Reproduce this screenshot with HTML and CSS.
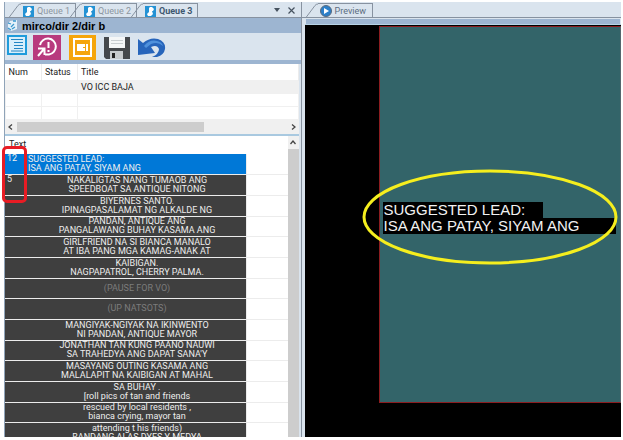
FILE: index.html
```html
<!DOCTYPE html>
<html lang="en">
<head>
    <meta charset="UTF-8">
    <meta name="viewport" content="width=device-width, initial-scale=1.0">
    <title>Prompter Queue</title>
    <link rel="stylesheet" href="styles.css">
</head>
<body>
    <svg class="defs" width="0" height="0" aria-hidden="true">
        <symbol id="slant" viewBox="0 0 12 14">
            <path d="M0 14 L9 2 Q10 .5 12 .5" fill="none" stroke="#8792a0"/>
        </symbol>
        <symbol id="queue-icon" viewBox="0 0 11 11">
            <rect width="11" height="11" fill="#2492d4"/>
            <path d="M5 1h2l2 2-1 2H7l1 3-2 2H3L2 8l2-2V2z" fill="#fff"/>
        </symbol>
    </svg>

    <div class="app">
        <section class="queue">
            <nav class="tabs">
                <button class="tab">
                    <svg class="slant"><use href="#slant"/></svg>
                    <span class="tab-body"><svg class="tab-icon"><use href="#queue-icon"/></svg>Queue 1</span>
                </button>
                <button class="tab">
                    <svg class="slant"><use href="#slant"/></svg>
                    <span class="tab-body"><svg class="tab-icon"><use href="#queue-icon"/></svg>Queue 2</span>
                </button>
                <button class="tab active">
                    <svg class="slant"><use href="#slant"/></svg>
                    <span class="tab-body"><svg class="tab-icon"><use href="#queue-icon"/></svg>Queue 3</span>
                </button>
                <div class="tab-tools">
                    <button aria-label="Tab list"><svg width="6" height="4" viewBox="0 0 6 4"><path d="M0 0h6L3 4z" fill="#46525f"/></svg></button>
                    <button aria-label="Close tab"><svg width="7" height="7" viewBox="0 0 7 7"><path d="M.5.5l6 6M6.500.5l-6 6" stroke="#46525f" stroke-width="1.200"/></svg></button>
                </div>
            </nav>

            <header class="path">
                <svg width="11" height="13" viewBox="0 0 11 13">
                    <path d="M3 2l7-1v9l-6 2-3-2V5z" fill="#e4f1fa"/>
                    <path d="M1 4l3 1M4 8l3-3M5 10l3-2M1 9l3 2M6 2h3" fill="none" stroke="#3b98cf" stroke-width="1.300"/>
                </svg>
                <h1>mirco/dir 2/dir b</h1>
            </header>

            <div class="toolbar">
                <button aria-label="Script">
                    <svg width="20" height="20" viewBox="0 0 20 20">
                        <rect x="1" y="1" width="18" height="18" fill="#d9effb" stroke="#1f9bdb" stroke-width="2"/>
                        <path d="M4 4.500h12M7 7.500h9M7 10.500h9M7 13.500h9M4 16h12" stroke="#2386c4"/>
                    </svg>
                </button>
                <button aria-label="Refresh">
                    <svg width="28" height="25" viewBox="0 0 28 25">
                        <rect width="28" height="25" fill="#b83a7e"/>
                        <path d="M12 19.500h4A8 8 0 1 0 7 10" fill="none" stroke="#fff" stroke-width="2"/>
                        <path d="M5 13.500h6.500V20M11 14l-6 7" fill="none" stroke="#fff" stroke-width="2"/>
                        <path d="M15.500 7v6M15.500 15v2" stroke="#fff" stroke-width="2"/>
                    </svg>
                </button>
                <button aria-label="Prompter window">
                    <svg width="27" height="25" viewBox="0 0 27 25">
                        <rect width="27" height="25" fill="#f5a50c"/>
                        <rect x="5" y="4" width="17" height="17" fill="none" stroke="#fff" stroke-width="2"/>
                        <path d="M8 9h8v7H8zM17 9h2v7h-2z" fill="#fff"/>
                        <path d="M14 12.500h3" stroke="#f5a50c"/>
                    </svg>
                </button>
                <button aria-label="Save">
                    <svg width="26" height="22" viewBox="0 0 26 22">
                        <path d="M0 0h26v22H2l-2-2z" fill="#45484c"/>
                        <path d="M5 0h16v11H5z" fill="#f4f6f7"/>
                        <path d="M7 3.500h12M7 6.500h12" stroke="#c9ced1"/>
                        <path d="M6 14h13v8H6z" fill="#c7cbce"/>
                        <path d="M8 16h3v5H8z" fill="#222"/>
                    </svg>
                </button>
                <button aria-label="Undo">
                    <svg width="28" height="19" viewBox="0 0 28 19">
                        <path d="M0 1l5 4Q12-1 20 1q8 3 7 10-1 6-8 8h-5q7-3 7-8-2-5-8-2l4 6L0 17z" fill="#2765bb"/>
                        <path d="M6 8q6-7 13-5 5 1 6 5-5-5-12-2L8 10z" fill="#4f91dc"/>
                    </svg>
                </button>
            </div>

            <div class="stories">
                <table>
                    <thead>
                        <tr><th class="col-num">Num</th><th class="col-status">Status</th><th>Title</th></tr>
                    </thead>
                    <tbody>
                        <tr class="current"><td></td><td></td><td>VO ICC BAJA</td></tr>
                        <tr><td></td><td></td><td></td></tr>
                        <tr><td></td><td></td><td></td></tr>
                    </tbody>
                </table>
                <div class="hscroll">
                    <svg width="5" height="6" viewBox="0 0 5 6"><path d="M4 .5L1 3l3 2.500" fill="none" stroke="#444" stroke-width="1.300"/></svg>
                    <div class="hthumb"></div>
                    <svg width="5" height="6" viewBox="0 0 5 6"><path d="M1 .5L4 3 1 5.500" fill="none" stroke="#444" stroke-width="1.300"/></svg>
                </div>
            </div>

            <div class="script">
                <div class="script-list">
                    <table>
                        <colgroup><col class="col-secs"><col><col class="col-rest"></colgroup>
                        <thead>
                            <tr><th colspan="2">Text</th><th></th></tr>
                        </thead>
                        <tbody>
                            <tr class="selected"><td class="secs">12</td><td class="line">SUGGESTED LEAD:<br>ISA ANG PATAY, SIYAM ANG</td><td></td></tr>
                            <tr><td class="secs">5</td><td class="line">NAKALIGTAS NANG TUMAOB ANG<br>SPEEDBOAT SA ANTIQUE NITONG</td><td></td></tr>
                            <tr><td class="secs"></td><td class="line">BIYERNES SANTO.<br>IPINAGPASALAMAT NG ALKALDE NG</td><td></td></tr>
                            <tr><td class="secs"></td><td class="line">PANDAN, ANTIQUE ANG<br>PANGALAWANG BUHAY KASAMA ANG</td><td></td></tr>
                            <tr><td class="secs"></td><td class="line">GIRLFRIEND NA SI BIANCA MANALO<br>AT IBA PANG MGA KAMAG-ANAK AT</td><td></td></tr>
                            <tr><td class="secs"></td><td class="line">KAIBIGAN.<br>NAGPAPATROL, CHERRY PALMA.</td><td></td></tr>
                            <tr class="cue"><td class="secs"></td><td class="line">(PAUSE FOR VO)</td><td></td></tr>
                            <tr class="cue"><td class="secs"></td><td class="line">(UP NATSOTS)</td><td></td></tr>
                            <tr><td class="secs"></td><td class="line">MANGIYAK-NGIYAK NA IKINWENTO<br>NI PANDAN, ANTIQUE MAYOR</td><td></td></tr>
                            <tr><td class="secs"></td><td class="line">JONATHAN TAN KUNG PAANO NAUWI<br>SA TRAHEDYA ANG DAPAT SANA'Y</td><td></td></tr>
                            <tr><td class="secs"></td><td class="line">MASAYANG OUTING KASAMA ANG<br>MALALAPIT NA KAIBIGAN AT MAHAL</td><td></td></tr>
                            <tr><td class="secs"></td><td class="line">SA BUHAY .<br>[roll pics of tan and friends</td><td></td></tr>
                            <tr><td class="secs"></td><td class="line">rescued by local residents ,<br>bianca crying, mayor tan</td><td></td></tr>
                            <tr><td class="secs"></td><td class="line">attending t his friends)<br>BANDANG ALAS DYES Y MEDYA</td><td></td></tr>
                        </tbody>
                    </table>
                    <div class="vscroll">
                        <svg width="6" height="5" viewBox="0 0 6 5"><path d="M.5 4L3 1l2.500 3" fill="none" stroke="#444" stroke-width="1.300"/></svg>
                        <div class="vthumb"></div>
                    </div>
                </div>
                <div class="timing-mark"></div>
            </div>
        </section>

        <section class="preview">
            <nav class="tabs">
                <button class="tab">
                    <svg class="slant"><use href="#slant"/></svg>
                    <span class="tab-body">
                        <svg class="play-icon" viewBox="0 0 12 12">
                            <circle cx="6" cy="6" r="5.500" fill="#2c7fc9" stroke="#5a6b7e"/>
                            <path d="M4 3l5 3-5 3z" fill="#fff"/>
                        </svg>Preview
                    </span>
                </button>
            </nav>
            <div class="screen">
                <div class="canvas">
                    <p class="short">SUGGESTED LEAD:</p>
                    <p>ISA ANG PATAY, SIYAM ANG</p>
                    <svg class="highlight" viewBox="0 0 256 96"><ellipse cx="128" cy="48" rx="126" ry="46" fill="none" stroke="#f5ee1e" stroke-width="3"/></svg>
                </div>
            </div>
        </section>
    </div>
</body>
</html>
```

FILE: styles.css
```css
* {
    box-sizing: border-box;
}

body {
    margin: 0;
    background: #fff;
    font-family: Roboto, "Liberation Sans", Arial, sans-serif;
    font-size: 9px;
    color: #222;
}

button {
    display: flex;
    padding: 0;
    border: none;
    background: none;
    font: inherit;
    color: inherit;
}

svg {
    display: block;
    flex: none;
}

table {
    border-collapse: collapse;
    table-layout: fixed;
    width: 100%;
}

th {
    text-align: left;
    font-weight: normal;
}

.defs {
    position: absolute;
}

.app {
    display: flex;
    height: 100vh;
    padding: 2px 2px 3px 4px;
}

/* left side */
.queue {
    flex: 296;
    min-width: 0;
    display: flex;
    flex-direction: column;
    border-left: 1px solid #8fa3b8;
    background: #dae4ee;
}

.tabs {
    display: flex;
    flex: none;
    height: 16px;
    padding: 1px 0 0 4px;
    border-bottom: 1px solid #8792a0;
    background: #dae4ee;
    color: #8c959f;
}

.tab {
    height: 15px;
}

.tab + .tab {
    margin-left: -6px;
}

.tab.active {
    color: #3f5870;
    font-weight: bold;
}

.slant {
    width: 12px;
    height: 15px;
}

.tab-body {
    display: flex;
    align-items: center;
    gap: 3px;
    min-width: 55px;
    height: 15px;
    padding: 0 5px 0 2px;
    border-top: 1px solid #8792a0;
    border-right: 1px solid #8792a0;
    line-height: 14px;
}

.tab-icon {
    width: 11px;
    height: 11px;
}

.tab-tools {
    display: flex;
    align-items: center;
    gap: 8px;
    margin-left: auto;
    padding-right: 6px;
}

.path {
    display: flex;
    flex: none;
    align-items: center;
    gap: 4px;
    height: 15px;
    padding-left: 2px;
    background: #9db5d1;
}

.path h1 {
    margin: 0;
    font: bold 11px/14px "Liberation Sans", Arial, sans-serif;
    color: #000;
}

.toolbar {
    display: flex;
    flex: none;
    gap: 6px;
    height: 31px;
    padding: 2px 2px 0;
    border-bottom: 4px solid #9db5d1;
}

.toolbar button:nth-child(n+3) {
    margin-left: 2px;
}

.toolbar button:nth-child(n+4) {
    align-items: center;
}

.stories {
    flex: none;
    height: 72px;
    margin-right: 2px;
    border-bottom: 2px solid #a9c9e0;
    background: #fff;
}

.stories th {
    height: 16px;
    padding: 0 3px;
    border-right: 1px solid #ececec;
}

.stories td {
    height: 13px;
    padding: 0 3px;
    border: 1px solid #f0f0f0;
}

.stories .col-num,
.stories .col-status {
    width: 36px;
}

.current {
    background: #f0f0f0;
}

.hscroll {
    display: flex;
    align-items: center;
    height: 14px;
    padding: 0 3px;
    background: #f0f0f0;
}

.hthumb {
    width: 65%;
    height: 10px;
    margin: 0 auto 0 4px;
    background: #cdcdcd;
}

.script {
    position: relative;
    display: flex;
    flex: 1;
    min-height: 0;
    margin-right: 2px;
    background: #fff;
}

.script-list {
    display: flex;
    flex: 1;
    align-items: flex-start;
    min-width: 0;
    overflow: hidden;
}

.script table {
    flex: 1;
}

.col-secs {
    width: 23px;
}

.col-rest {
    width: 41px;
}

.script th {
    height: 18px;
    padding: 2px 4px 0;
    line-height: 12px;
    vertical-align: top;
}

.script td {
    height: 21px;
    padding: 0;
    border-bottom: 1px solid #ececec;
    border-left: 1px solid #ececec;
    line-height: 9px;
    white-space: nowrap;
}

.script tr:nth-child(3n+1) td {
    height: 20px;
}

.script td.secs,
.script td.line {
    border-color: #ececec;
    border-left: none;
    background: #3f3f3f;
    color: #eee;
}

.script .secs {
    padding-left: 2px;
    vertical-align: top;
}

.script .line {
    text-align: center;
}

.script .cue td.line {
    color: #7c7c7c;
}

.script .selected td.secs,
.script .selected td.line {
    background: #0078d7;
    text-align: left;
}

.vscroll {
    display: flex;
    flex-direction: column;
    align-items: center;
    align-self: stretch;
    width: 11px;
    padding-top: 4px;
    background: #f0f0f0;
}

.vthumb {
    flex: 1;
    width: 11px;
    margin-top: 4px;
    background: #cdcdcd;
}

.timing-mark {
    position: absolute;
    top: 10px;
    left: -3px;
    width: 25px;
    height: 57px;
    border: 3px solid #e81c24;
    border-radius: 5px;
}

/* right side */
.preview {
    flex: 320;
    min-width: 0;
    display: flex;
    flex-direction: column;
    border-left: 1px solid #8792a0;
    background: #dae4ee;
}

.preview .tab {
    color: #5b6d80;
}

.play-icon {
    width: 12px;
    height: 12px;
}

.screen {
    display: flex;
    flex: 1;
    margin: 6px 0 0 3px;
    padding: 1px 0 34px 74px;
    border-top: 1px solid #b7d3e6;
    background: #000;
    box-shadow: 0 -6px 0 -1px #9db5d1;
}

.canvas {
    position: relative;
    flex: 1;
    padding: 175px 4px 0 3px;
    border: 1px solid #8c1d20;
    border-right-color: #56666e;
    background: #336469;
}

.canvas p {
    margin: 0;
    padding-left: 1px;
    background: #000;
    color: #f2f2f2;
    font: 15px/16px "Liberation Sans", Arial, sans-serif;
}

.canvas .short {
    width: 160px;
}

.highlight {
    position: absolute;
    top: 142px;
    left: -18px;
    width: 256px;
    height: 96px;
}
```
